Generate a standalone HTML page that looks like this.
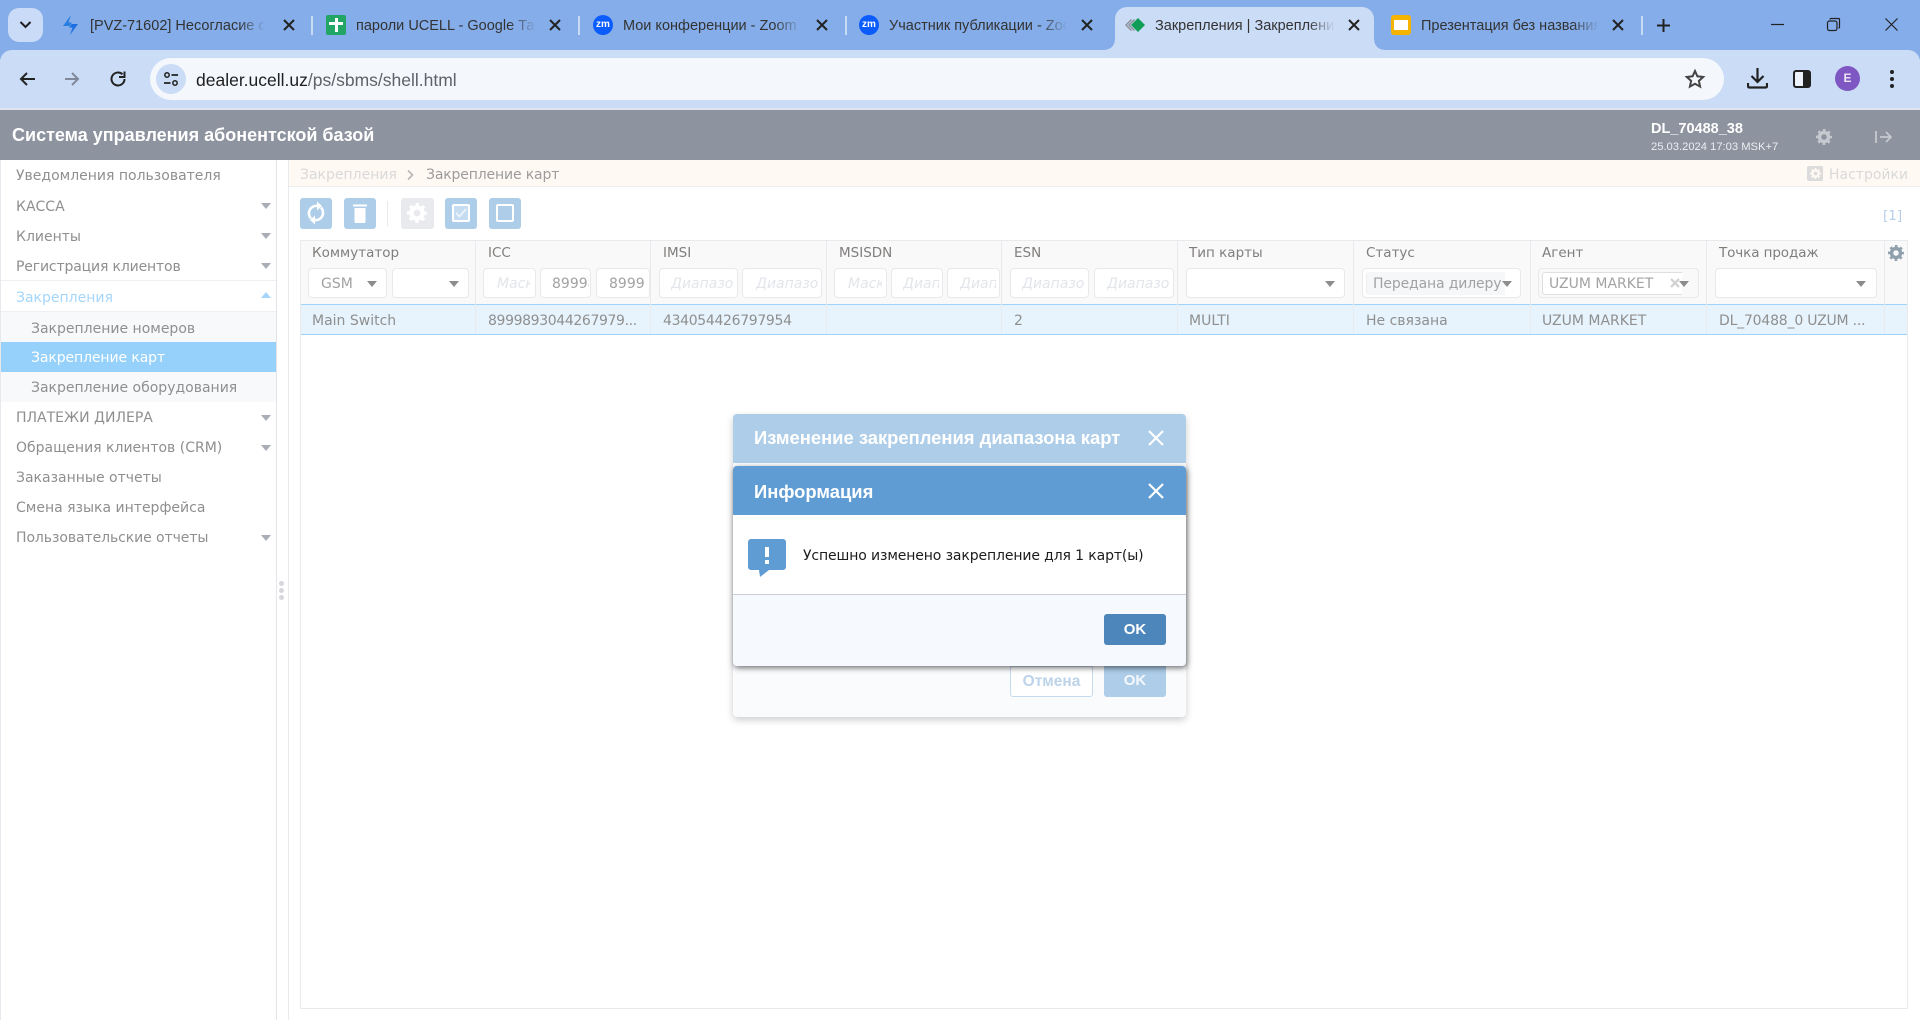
<!DOCTYPE html>
<html lang="ru"><head><meta charset="utf-8"><title>Закрепления | Закрепление карт</title>
<style>
html,body{margin:0;padding:0;width:1920px;height:1020px;overflow:hidden;background:#fff}
body{position:relative;font-family:"DejaVu Sans","Liberation Sans",sans-serif;font-size:14px;color:#8f8f8f}
div,span,svg{position:absolute;box-sizing:border-box}
.t{white-space:nowrap;line-height:20px;height:20px}
.tab{font:14.5px/20px "Liberation Sans",sans-serif;color:#333;white-space:nowrap;overflow:hidden;top:16px;height:20px;-webkit-mask-image:linear-gradient(90deg,#000 85%,transparent 100%);mask-image:linear-gradient(90deg,#000 85%,transparent 100%)}
.sep{top:16px;width:2px;height:19px;background:#c9daf5}
.m{left:16px}.s{left:31px}
.a{width:0;height:0;border-left:5.5px solid transparent;border-right:5.5px solid transparent;border-top:6px solid #a9adb5;left:261px}
.ic{top:198px;height:31px;border-radius:3px;background:#aecde9}
.h{top:243px;color:#807e7c;font-size:13.5px}
.r{top:311px;color:#8f8f8f}
.f{top:268px;height:30px;background:#fff;border:1px solid #e9e9ec;border-radius:4px;font-size:14px;line-height:30px;overflow:hidden;white-space:nowrap;color:#a2a2a2}
.p{font-style:italic;color:#e2e5ea}
.c{top:0;height:28px;overflow:hidden}
.d{width:0;height:0;border-left:5.5px solid transparent;border-right:5.5px solid transparent;border-top:6px solid #8c8c8c;top:12px}
.v{top:241px;height:93px;width:1px;background:#e9eaed}
</style></head><body>
<!-- tab strip -->
<div style="left:0;top:0;width:1920px;height:60px;background:#85ade9"></div>
<div style="left:8px;top:8px;width:35px;height:34px;border-radius:11px;background:#c9dbf6"></div>
<svg style="left:19px;top:20px" width="13" height="10" viewBox="0 0 13 10"><path d="M1.500 2L6.500 7 11.500 2" fill="none" stroke="#1f1f1f" stroke-width="2"/></svg>
<svg style="left:62px;top:15px" width="17" height="20" viewBox="0 0 17 20"><path d="M9 0L1 11h6.500L10 7.500H6.500z" fill="#2a7de1"/><path d="M8 20l8-11H9.500L7 12.500h3.500z" fill="#1c6fe0"/></svg>
<div class="tab" style="left:90px;width:175px">[PVZ-71602] Несогласие с</div>
<svg style="left:283px;top:19px" width="12" height="12" viewBox="0 0 12 12"><path d="M1 1l10 10M11 1L1 11" stroke="#222" stroke-width="2"/></svg>
<div class="sep" style="left:311px"></div>
<div style="left:326px;top:15px;width:20px;height:20px;border-radius:2px;background:#23a566"></div>
<div style="left:335px;top:18px;width:2.5px;height:14px;background:#fff"></div>
<div style="left:329px;top:22px;width:14px;height:2.5px;background:#fff"></div>
<div class="tab" style="left:356px;width:180px">пароли UCELL - Google Таблицы</div>
<svg style="left:549px;top:19px" width="12" height="12" viewBox="0 0 12 12"><path d="M1 1l10 10M11 1L1 11" stroke="#222" stroke-width="2"/></svg>
<div class="sep" style="left:578px"></div>
<div style="left:593px;top:15px;width:20px;height:20px;border-radius:50%;background:#0b5cff;color:#fff;font:bold 10px/19px 'Liberation Sans',sans-serif;text-align:center">zm</div>
<div class="tab" style="left:623px;width:178px">Мои конференции - Zoom</div>
<svg style="left:816px;top:19px" width="12" height="12" viewBox="0 0 12 12"><path d="M1 1l10 10M11 1L1 11" stroke="#222" stroke-width="2"/></svg>
<div class="sep" style="left:845px"></div>
<div style="left:859px;top:15px;width:20px;height:20px;border-radius:50%;background:#0b5cff;color:#fff;font:bold 10px/19px 'Liberation Sans',sans-serif;text-align:center">zm</div>
<div class="tab" style="left:889px;width:178px">Участник публикации - Zoom</div>
<svg style="left:1081px;top:19px" width="12" height="12" viewBox="0 0 12 12"><path d="M1 1l10 10M11 1L1 11" stroke="#222" stroke-width="2"/></svg>
<!-- toolbar -->
<div style="left:0;top:50px;width:1920px;height:60px;background:#cbdcf6;border-radius:12px 12px 0 0"></div>
<div style="left:0;top:108px;width:1920px;height:2px;background:#dfe4ec"></div>
<!-- active tab -->
<div style="left:1115px;top:7px;width:259px;height:44px;background:#cbdcf6;border-radius:12px 12px 0 0"></div>
<div style="left:1105px;top:40px;width:10px;height:10px;background:radial-gradient(circle at 0 0,#85ade9 9.500px,#cbdcf6 10px)"></div>
<div style="left:1374px;top:40px;width:10px;height:10px;background:radial-gradient(circle at 100% 0,#85ade9 9.500px,#cbdcf6 10px)"></div>
<svg style="left:1125px;top:17px" width="21" height="16" viewBox="0 0 21 16"><path d="M6 2L0 8l6 6 1-1-5-5 5-5zM9 2L3 8l6 6 1-1-5-5 5-5z" fill="#8a9098"/><path d="M13 1l7 7-7 7-7-7z" fill="#0f9d58"/></svg>
<div class="tab" style="left:1155px;width:180px">Закрепления | Закрепление</div>
<svg style="left:1348px;top:19px" width="12" height="12" viewBox="0 0 12 12"><path d="M1 1l10 10M11 1L1 11" stroke="#222" stroke-width="2"/></svg>
<div style="left:1391px;top:15px;width:20px;height:20px;border-radius:3px;background:#f4b400"></div>
<div style="left:1394px;top:20px;width:14px;height:10px;background:#fff"></div>
<div class="tab" style="left:1421px;width:178px">Презентация без названия</div>
<svg style="left:1612px;top:19px" width="12" height="12" viewBox="0 0 12 12"><path d="M1 1l10 10M11 1L1 11" stroke="#222" stroke-width="2"/></svg>
<div class="sep" style="left:1641px"></div>
<svg style="left:1656px;top:18px" width="15" height="15" viewBox="0 0 15 15"><path d="M7.500 1v13M1 7.500h13" stroke="#222" stroke-width="2"/></svg>
<svg style="left:1771px;top:23px" width="13" height="3" viewBox="0 0 13 3"><path d="M0 1.500h13" stroke="#222" stroke-width="1.200"/></svg>
<svg style="left:1826px;top:17px" width="15" height="15" viewBox="0 0 15 15"><rect x="1.500" y="4" width="9.500" height="9.500" rx="2" fill="none" stroke="#222" stroke-width="1.200"/><path d="M4 2.500q0-1 1-1h7.500q1 0 1 1V10q0 1-1 1" fill="none" stroke="#222" stroke-width="1.200"/></svg>
<svg style="left:1885px;top:18px" width="13" height="13" viewBox="0 0 13 13"><path d="M.5.5l12 12M12.500.5l-12 12" stroke="#222" stroke-width="1.200"/></svg>
<svg style="left:18px;top:70px" width="18" height="18" viewBox="0 0 18 18"><path d="M17 9H3.500M9 3L3 9l6 6" fill="none" stroke="#222" stroke-width="2"/></svg>
<svg style="left:63px;top:70px" width="18" height="18" viewBox="0 0 18 18"><path d="M2 9h13.500M9 3l6 6-6 6" fill="none" stroke="#80889a" stroke-width="2"/></svg>
<svg style="left:109px;top:70px" width="18" height="18" viewBox="0 0 18 18"><path d="M15.500 9a6.500 6.500 0 1 1-2-4.700" fill="none" stroke="#222" stroke-width="2"/><path d="M15.500 1.500v5.500h-5.500" fill="none" stroke="#222" stroke-width="2"/></svg>
<div style="left:150px;top:58px;width:1574px;height:42px;border-radius:21px;background:#f4f7fc"></div>
<div style="left:156px;top:64px;width:30px;height:30px;border-radius:50%;background:#cbdcf6"></div>
<svg style="left:163px;top:71px" width="16" height="16" viewBox="0 0 16 16"><circle cx="4" cy="4" r="2.200" fill="none" stroke="#222" stroke-width="1.500"/><path d="M8.500 4H15M1 12h6.500" stroke="#222" stroke-width="1.800"/><circle cx="12" cy="12" r="2.200" fill="none" stroke="#222" stroke-width="1.500"/></svg>
<div class="t" style="left:196px;top:70px;font:17.5px/20px 'Liberation Sans',sans-serif;color:#1f1f1f">dealer.ucell.uz<span style="position:static;color:#5f6368">/ps/sbms/shell.html</span></div>
<svg style="left:1684px;top:68px" width="22" height="22" viewBox="0 0 22 22"><path d="M11 3l2.400 5.300 5.800.7-4.300 3.900 1.200 5.700L11 15.800l-5.100 2.800 1.200-5.700L2.800 9l5.800-.7z" fill="none" stroke="#444" stroke-width="2"/></svg>
<svg style="left:1747px;top:68px" width="21" height="21" viewBox="0 0 21 21"><path d="M10.500 0v13M4.500 8l6 6 6-6" fill="none" stroke="#222" stroke-width="2.200"/><path d="M1 15v3q0 1.500 1.500 1.500h16q1.500 0 1.500-1.500v-3" fill="none" stroke="#222" stroke-width="2.200"/></svg>
<svg style="left:1793px;top:70px" width="18" height="18" viewBox="0 0 18 18"><rect x="1" y="1" width="16" height="16" rx="2" fill="#eef3fb" stroke="#222" stroke-width="2"/><rect x="10" y="1" width="7" height="16" fill="#222"/></svg>
<div style="left:1835px;top:66px;width:25px;height:25px;border-radius:50%;background:#7e57c2;color:#ece6f7;font:bold 12px/25px 'Liberation Sans',sans-serif;text-align:center">E</div>
<svg style="left:1888px;top:69px" width="8" height="20" viewBox="0 0 8 20"><circle cx="4" cy="3" r="2" fill="#222"/><circle cx="4" cy="10" r="2" fill="#222"/><circle cx="4" cy="17" r="2" fill="#222"/></svg>
<!-- app header -->
<div style="left:0;top:110px;width:1920px;height:50px;background:#8d939f"></div>
<div class="t" style="left:12px;top:124px;color:#fff;font:bold 18px/22px 'Liberation Sans',sans-serif">Система управления абонентской базой</div>
<div class="t" style="left:1651px;top:119px;color:#fff;font:bold 14.5px/20px 'Liberation Sans',sans-serif">DL_70488_38</div>
<div class="t" style="left:1651px;top:137px;color:#eceef1;font:11.2px/20px 'Liberation Sans',sans-serif">25.03.2024 17:03 MSK+7</div>
<svg style="left:1816px;top:129px" width="16" height="16" viewBox="0 0 16 16"><circle cx="8" cy="8" r="4.500" fill="none" stroke="#c6c9cf" stroke-width="3.500"/><circle cx="8" cy="8" r="6.500" fill="none" stroke="#c6c9cf" stroke-width="3" stroke-dasharray="2.500 2.600" stroke-dashoffset="1.250"/></svg>
<svg style="left:1875px;top:130px" width="17" height="14" viewBox="0 0 17 14"><path d="M1 1v12M5 7h11M11 2l5 5-5 5" fill="none" stroke="#c6c9cf" stroke-width="1.800"/></svg>
<!-- sidebar -->
<div style="left:0;top:160px;width:277px;height:860px;background:#fff;border-left:1px solid #e8e9ee;border-right:1px solid #e4e5ea"></div>
<div style="left:1px;top:280px;width:275px;height:1px;background:#eeeff2"></div>
<div style="left:1px;top:311px;width:275px;height:91px;background:#f8f9fb;border-top:1px solid #eeeff2"></div>
<div style="left:1px;top:342px;width:275px;height:30px;background:#96d1fb"></div>
<div style="left:288px;top:160px;width:1px;height:860px;background:#e9eaee"></div>
<div style="left:279px;top:581px;width:5px;height:5px;border-radius:50%;background:#d5d7dc"></div>
<div style="left:279px;top:588px;width:5px;height:5px;border-radius:50%;background:#d5d7dc"></div>
<div style="left:279px;top:595px;width:5px;height:5px;border-radius:50%;background:#d5d7dc"></div>
<div class="t m" style="top:166px">Уведомления пользователя</div>
<div class="t m" style="top:197px">КАССА</div><div class="a" style="top:203px"></div>
<div class="t m" style="top:227px">Клиенты</div><div class="a" style="top:233px"></div>
<div class="t m" style="top:257px;letter-spacing:-.15px">Регистрация клиентов</div><div class="a" style="top:263px"></div>
<div class="t m" style="top:288px;color:#a4d6fb">Закрепления</div><div style="left:261px;top:292px;width:0;height:0;border-left:5.5px solid transparent;border-right:5.5px solid transparent;border-bottom:6px solid #a4d6fb"></div>
<div class="t s" style="top:319px">Закрепление номеров</div>
<div class="t s" style="top:348px;color:#fff;letter-spacing:-.1px">Закрепление карт</div>
<div class="t s" style="top:378px">Закрепление оборудования</div>
<div class="t m" style="top:408px">ПЛАТЕЖИ ДИЛЕРА</div><div class="a" style="top:415px"></div>
<div class="t m" style="top:438px">Обращения клиентов (CRM)</div><div class="a" style="top:445px"></div>
<div class="t m" style="top:468px">Заказанные отчеты</div>
<div class="t m" style="top:498px">Смена языка интерфейса</div>
<div class="t m" style="top:528px;letter-spacing:-.08px">Пользовательские отчеты</div><div class="a" style="top:535px"></div>
<!-- breadcrumb -->
<div style="left:289px;top:160px;width:1631px;height:27px;background:#fff9f3;border-bottom:1px solid #eceef0"></div>
<div class="t" style="left:300px;top:165px;color:#d9d9d9">Закрепления</div>
<svg style="left:407px;top:170px" width="7" height="10" viewBox="0 0 7 10"><path d="M1 .5L5.500 5 1 9.500" fill="none" stroke="#b5b5b5" stroke-width="1.600"/></svg>
<div class="t" style="left:426px;top:165px;color:#9c9c9c;letter-spacing:-.15px">Закрепление карт</div>
<div style="left:1807px;top:166px;width:16px;height:15px;border-radius:2px;background:#dcdcdc"></div>
<svg style="left:1810px;top:168px" width="11" height="11" viewBox="0 0 16 16"><circle cx="8" cy="8" r="4.500" fill="none" stroke="#fff9f3" stroke-width="3.500"/><circle cx="8" cy="8" r="6.500" fill="none" stroke="#fff9f3" stroke-width="3" stroke-dasharray="2.500 2.600" stroke-dashoffset="1.250"/></svg>
<div class="t" style="left:1829px;top:165px;color:#d9d9d9">Настройки</div>
<!-- toolbar buttons -->
<div class="ic" style="left:300px;width:32px"></div>
<svg style="left:307px;top:201px" width="18" height="24" viewBox="0 0 18 24"><path d="M4 17.500A7.500 7.500 0 0 1 11 5" fill="none" stroke="#fff" stroke-width="2.500"/><path d="M14 6.500A7.500 7.500 0 0 1 7 19" fill="none" stroke="#fff" stroke-width="2.500"/><path d="M10 .5L15 5l-5 4.500zM8 14.500L3 19l5 4.500z" fill="#fff"/></svg>
<div class="ic" style="left:344px;width:32px"></div>
<svg style="left:353px;top:203px" width="14" height="20" viewBox="0 0 14 20"><path d="M0 1.500h14v2H0zM1.500 5h11v14a1 1 0 0 1-1 1h-9a1 1 0 0 1-1-1z" fill="#fff"/></svg>
<div style="left:387px;top:201px;width:1px;height:25px;background:#e8e9ec"></div>
<div class="ic" style="left:401px;width:33px;background:#e8eaed"></div>
<svg style="left:407px;top:203px" width="20" height="20" viewBox="0 0 16 16"><circle cx="8" cy="8" r="4.500" fill="none" stroke="#fff" stroke-width="3.500"/><circle cx="8" cy="8" r="6.500" fill="none" stroke="#fff" stroke-width="3" stroke-dasharray="2.500 2.600" stroke-dashoffset="1.250"/></svg>
<div class="ic" style="left:445px;width:32px"></div>
<div style="left:452px;top:204px;width:18px;height:18px;background:#c6dcf0;border:2px solid #fff;border-radius:2px"></div>
<svg style="left:455px;top:208px" width="12" height="10" viewBox="0 0 12 10"><path d="M1 5l3.500 3.500L11 1" fill="none" stroke="#f2f7fc" stroke-width="1.500"/></svg>
<div class="ic" style="left:489px;width:32px"></div>
<div style="left:496px;top:204px;width:18px;height:18px;border:2.500px solid #fff;border-radius:2px"></div>
<div class="t" style="left:1883px;top:206px;color:#b5cfec;font-size:13.5px">[1]</div>
<!-- table -->
<div style="left:300px;top:240px;width:1608px;height:769px;background:#fff;border:1px solid #e9eaed"></div>
<div style="left:301px;top:241px;width:1606px;height:63px;background:#f9f9fa"></div>
<div style="left:301px;top:304px;width:1606px;height:31px;background:#e7f4fd;border-top:1px solid #9ed3fb;border-bottom:1px solid #9ed3fb"></div>
<div class="v" style="left:475px"></div><div class="v" style="left:650px"></div><div class="v" style="left:826px"></div><div class="v" style="left:1001px"></div><div class="v" style="left:1177px"></div><div class="v" style="left:1353px"></div><div class="v" style="left:1530px"></div><div class="v" style="left:1706px"></div><div class="v" style="left:1884px"></div>
<div class="t h" style="left:312px">Коммутатор</div>
<div class="t h" style="left:488px">ICC</div>
<div class="t h" style="left:663px">IMSI</div>
<div class="t h" style="left:839px">MSISDN</div>
<div class="t h" style="left:1014px">ESN</div>
<div class="t h" style="left:1189px">Тип карты</div>
<div class="t h" style="left:1366px">Статус</div>
<div class="t h" style="left:1542px">Агент</div>
<div class="t h" style="left:1719px;letter-spacing:-.1px">Точка продаж</div>
<svg style="left:1888px;top:245px" width="16" height="16" viewBox="0 0 16 16"><circle cx="8" cy="8" r="4.500" fill="none" stroke="#8fa0ad" stroke-width="3.500"/><circle cx="8" cy="8" r="6.500" fill="none" stroke="#8fa0ad" stroke-width="3" stroke-dasharray="2.500 2.600" stroke-dashoffset="1.250"/></svg>
<div class="f" style="left:308px;width:79px;padding-left:12px">GSM<div class="d" style="left:58px"></div></div>
<div class="f" style="left:392px;width:77px"><div class="d" style="left:56px"></div></div>
<div class="f p" style="left:483px;width:53px"><div class="c" style="left:13px;width:33px">Маск</div></div>
<div class="f" style="left:540px;width:51px"><div class="c" style="left:11px;width:37px">89998</div></div>
<div class="f" style="left:596px;width:54px"><div class="c" style="left:12px;width:35px">89998</div></div>
<div class="f p" style="left:659px;width:79px"><div class="c" style="left:11px;width:64px">Диапазо</div></div>
<div class="f p" style="left:742px;width:80px"><div class="c" style="left:13px;width:64px">Диапазо</div></div>
<div class="f p" style="left:834px;width:53px"><div class="c" style="left:13px;width:34px">Маск</div></div>
<div class="f p" style="left:891px;width:52px"><div class="c" style="left:11px;width:36px">Диап</div></div>
<div class="f p" style="left:947px;width:53px"><div class="c" style="left:12px;width:36px">Диап</div></div>
<div class="f p" style="left:1010px;width:79px"><div class="c" style="left:11px;width:64px">Диапазо</div></div>
<div class="f p" style="left:1094px;width:80px"><div class="c" style="left:12px;width:64px">Диапазо</div></div>
<div class="f" style="left:1186px;width:159px"><div class="d" style="left:138px"></div></div>
<div class="f" style="left:1362px;width:159px"></div>
<div style="left:1366px;top:272px;width:139px;height:23px;background:#f6f7f9;border-radius:3px 0 0 3px;border-left:1px solid #eeeef1;overflow:hidden;white-space:nowrap;padding-left:6px;line-height:25px;color:#a2a2a2;letter-spacing:-.15px">Передана дилеру</div>
<div class="d" style="left:1502px;top:281px"></div>
<div class="f" style="left:1538px;width:161px;background:#f9f9fa"></div>
<div style="left:1542px;top:272px;width:140px;height:23px;background:#fff;border-radius:3px 0 0 3px;border:1px solid #dfe0e4;border-right:0;overflow:hidden;white-space:nowrap;padding-left:6px;line-height:23px;color:#a2a2a2">UZUM MARKET</div>
<svg style="left:1670px;top:278px" width="10" height="10" viewBox="0 0 10 10"><path d="M1 1l8 8M9 1L1 9" stroke="#d0d0d0" stroke-width="2.200"/></svg>
<div class="d" style="left:1679px;top:281px"></div>
<div class="f" style="left:1715px;width:162px"><div class="d" style="left:140px"></div></div>
<div class="t r" style="left:312px">Main Switch</div>
<div class="t r" style="left:488px;letter-spacing:-.37px">8999893044267979...</div>
<div class="t r" style="left:663px;letter-spacing:-.33px">434054426797954</div>
<div class="t r" style="left:1014px">2</div>
<div class="t r" style="left:1189px">MULTI</div>
<div class="t r" style="left:1366px">Не связана</div>
<div class="t r" style="left:1542px">UZUM MARKET</div>
<div class="t r" style="left:1719px;letter-spacing:-.2px">DL_70488_0 UZUM ...</div>
<!-- back dialog -->
<div style="left:733px;top:414px;width:453px;height:303px;background:#fafbfd;border-radius:4px;box-shadow:0 3px 8px rgba(0,0,0,.2)"></div>
<div style="left:733px;top:414px;width:453px;height:49px;background:#aecde9;border-radius:4px 4px 0 0"></div>
<div class="t" style="left:754px;top:427px;color:#fff;font:bold 18.4px/22px 'Liberation Sans',sans-serif">Изменение закрепления диапазона карт</div>
<svg style="left:1148px;top:430px" width="16" height="16" viewBox="0 0 16 16"><path d="M1 1l14 14M15 1L1 15" stroke="#fff" stroke-width="2.200"/></svg>
<div style="left:1010px;top:666px;width:83px;height:31px;background:#fff;border:1px solid #c5daee;border-radius:0 0 3px 3px;color:#bcd3ea;text-align:center;font:bold 15.5px/30px 'Liberation Sans',sans-serif">Отмена</div>
<div style="left:1104px;top:666px;width:62px;height:31px;background:#aecde9;border-radius:0 0 3px 3px;color:#f4f8fc;text-align:center;font:bold 15px/30px 'Liberation Sans',sans-serif">OK</div>
<!-- front dialog -->
<div style="left:733px;top:466px;width:453px;height:200px;background:#f6f9fd;border-radius:4px;box-shadow:1px 2px 6px rgba(0,0,0,.55)"></div>
<div style="left:733px;top:466px;width:453px;height:49px;background:#5e9cd3;border-radius:4px 4px 0 0"></div>
<div style="left:733px;top:515px;width:453px;height:80px;background:#fff;border-bottom:1px solid #c9ced8"></div>
<div class="t" style="left:754px;top:481px;color:#fff;font:bold 18.4px/22px 'Liberation Sans',sans-serif">Информация</div>
<svg style="left:1148px;top:483px" width="16" height="16" viewBox="0 0 16 16"><path d="M1 1l14 14M15 1L1 15" stroke="#fff" stroke-width="2.200"/></svg>
<svg style="left:748px;top:539px" width="38" height="38" viewBox="0 0 38 38"><path d="M3 0h32a3 3 0 0 1 3 3v25a3 3 0 0 1-3 3H21l-9 7-1-7H3a3 3 0 0 1-3-3V3a3 3 0 0 1 3-3z" fill="#5e9cd3"/><path d="M17 8h4v10h-4zM17 21h4v4h-4z" fill="#fff"/></svg>
<div class="t" style="left:803px;top:546px;color:#1c1c1c;font-size:14px;letter-spacing:-.12px">Успешно изменено закрепление для 1 карт(ы)</div>
<div style="left:1104px;top:614px;width:62px;height:31px;background:#4d86ba;border-radius:3px;color:#fff;text-align:center;font:bold 15px/31px 'Liberation Sans',sans-serif">OK</div>
</body></html>
